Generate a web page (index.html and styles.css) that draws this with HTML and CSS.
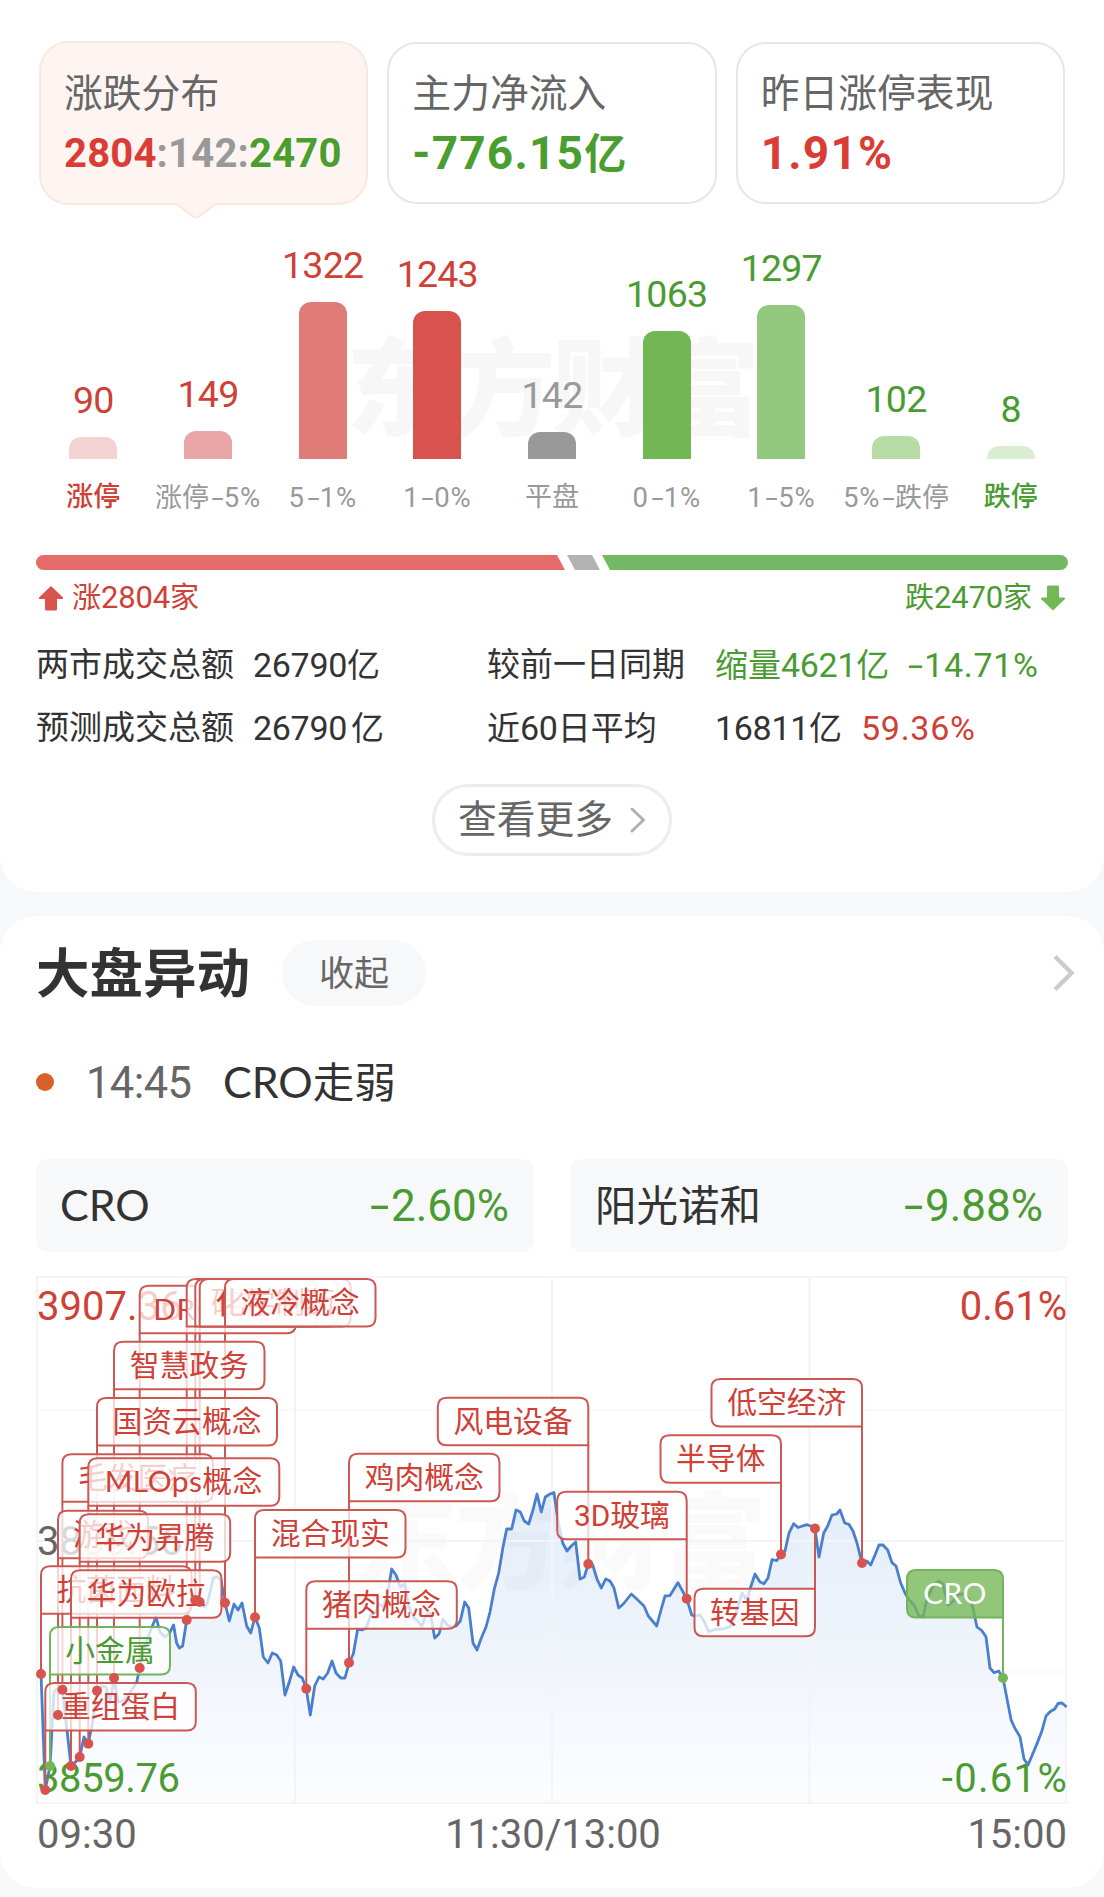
FILE: index.html
```html
<!DOCTYPE html>
<html lang="zh-CN">
<head>
  <meta charset="UTF-8" />
  <title>涨跌分布 - 大盘异动</title>
  <link rel="stylesheet" href="styles.css">
</head>
<body>
  <!-- 涨跌分布 -->
  <section class="panel market">
    <div class="tabs">
      <div class="tab active">
        <div class="tab-title">涨跌分布</div>
        <div class="tab-value ratio"><span class="up">2804</span><span class="flat">:142:</span><span class="down">2470</span></div>
        <svg class="tip" width="44" height="18" viewBox="0 0 44 18"><path d="M0 0H44V1.500H42L25 14.500Q22 17 19 14.500L2 1.500H0Z" fill="#fef5f2"/><path d="M1 1.200Q2.500 1.500 4 3L19 14.500Q22 17 25 14.500L40 3Q41.500 1.500 43 1.200" fill="none" stroke="#fbe7dd" stroke-width="2"/></svg>
      </div>
      <div class="tab">
        <div class="tab-title">主力净流入</div>
        <div class="tab-value down">-776.15<span class="unit">亿</span></div>
      </div>
      <div class="tab">
        <div class="tab-title">昨日涨停表现</div>
        <div class="tab-value up">1.91%</div>
      </div>
    </div>

    <div class="bars">
      <div class="watermark">东方财富</div>
      <div class="col"><span class="num up">90</span><i class="bar b1" style="height: 22px"></i></div>
      <div class="col"><span class="num up">149</span><i class="bar b2" style="height: 28px"></i></div>
      <div class="col"><span class="num up">1322</span><i class="bar b3" style="height: 157px"></i></div>
      <div class="col"><span class="num up">1243</span><i class="bar b4" style="height: 148px"></i></div>
      <div class="col"><span class="num flat">142</span><i class="bar b5" style="height: 27px"></i></div>
      <div class="col"><span class="num down">1063</span><i class="bar b6" style="height: 128px"></i></div>
      <div class="col"><span class="num down">1297</span><i class="bar b7" style="height: 154px"></i></div>
      <div class="col"><span class="num down">102</span><i class="bar b8" style="height: 23px"></i></div>
      <div class="col"><span class="num down">8</span><i class="bar b9" style="height: 13px"></i></div>
    </div>
    <div class="labels">
      <span class="up strong">涨停</span>
      <span>涨停<b><i class="minus">-</i>5%</b></span>
      <span><b>5<i class="minus">-</i>1%</b></span>
      <span><b>1<i class="minus">-</i>0%</b></span>
      <span>平盘</span>
      <span><b>0<i class="minus">-</i>1%</b></span>
      <span><b>1<i class="minus">-</i>5%</b></span>
      <span><b>5%<i class="minus">-</i></b>跌停</span>
      <span class="down strong">跌停</span>
    </div>

    <div class="split">
      <i class="part-up"></i>
      <i class="part-flat"></i>
      <i class="part-down"></i>
    </div>
    <div class="legend">
      <span class="legend-item up">
        <svg width="26" height="26" viewBox="0 0 26 26"><path d="M13 1L25 12.500Q25.500 14 24 14H19V24Q19 25.500 17.500 25.500H8.500Q7 25.500 7 24V14H2Q.5 14 1 12.500Z" fill="#d9534f"/></svg>
        <span>涨<b>2804</b>家</span>
      </span>
      <span class="legend-item down">
        <span>跌<b>2470</b>家</span>
        <svg width="26" height="26" viewBox="0 0 26 26"><path d="M13 25.500L25 14Q25.500 12.500 24 12.500H19V2Q19 .5 17.500 .5H8.500Q7 .5 7 2V12.500H2Q.5 12.500 1 14Z" fill="#72b855"/></svg>
      </span>
    </div>

    <div class="stats">
      <span>两市成交总额</span><span><b>26790</b>亿</span>
      <span>较前一日同期</span><span class="down">缩量<b>4621</b>亿<b class="pct"><i class="minus">-</i>14.71%</b></span>
      <span>预测成交总额</span><span><b class="wide">26790</b>亿</span>
      <span>近<b>60</b>日平均</span><span><b>16811</b>亿<b class="pct up">59.36%</b></span>
    </div>

    <div class="more">
      <span>查看更多</span>
      <svg width="16" height="26" viewBox="0 0 16 26"><path d="M2 2L13.500 13L2 24" fill="none" stroke="#b0b0b0" stroke-width="3" stroke-linecap="round" stroke-linejoin="round"/></svg>
    </div>
  </section>

  <!-- 大盘异动 -->
  <section class="panel moves">
    <div class="head">
      <h2>大盘异动</h2>
      <span class="fold">收起</span>
      <svg class="go" width="24" height="38" viewBox="0 0 24 38"><path d="M3 2.500L19.500 19L3 35.500" fill="none" stroke="#ccc" stroke-width="4.500"/></svg>
    </div>
    <div class="event">
      <i class="dot"></i>
      <span class="time">14:45</span>
      <span class="event-name"><span class="latin">CRO</span>走弱</span>
    </div>
    <div class="stocks">
      <div class="stock"><span class="latin">CRO</span><span class="rate down"><i class="minus">-</i>2.60%</span></div>
      <div class="stock"><span>阳光诺和</span><span class="rate down"><i class="minus">-</i>9.88%</span></div>
    </div>

    <svg class="chart" id="chart" width="1104" height="636" viewBox="0 1252 1104 636">
      <defs>
        <linearGradient id="area" gradientUnits="userSpaceOnUse" x1="0" y1="1490" x2="0" y2="1803">
          <stop offset="0" stop-color="#e3edf9" />
          <stop offset=".5" stop-color="#eff4fb" />
          <stop offset="1" stop-color="#fcfdff" />
        </linearGradient>
      </defs>
      <path id="fill" fill="url(#area)" />
      <text class="mark" x="558" y="1581">东方财富</text>
      <g class="grid">
        <rect x="37" y="1277" width="1029" height="526" />
        <path d="M295 1277V1803M552 1277V1803M809.500 1277V1803M37 1541H1066" />
        <path class="dash" d="M37 1410H1066M37 1672H1066" />
      </g>
      <polyline id="line" class="line" />
      <g class="axis">
        <text class="t-up" x="37" y="1319.500">3907.36</text>
        <text class="t-gray" x="37" y="1555">3883.56</text>
        <text class="t-down tight" x="37" y="1791.500">3859.76</text>
        <text class="t-up end" x="1067" y="1319.500">0.61%</text>
        <text class="t-down end spaced" x="1068" y="1791.500">-0.61%</text>
        <text class="t-gray" x="37" y="1847.500">09:30</text>
        <text class="t-gray mid" x="553" y="1847.500">11:30/13:00</text>
        <text class="t-gray end" x="1067" y="1847.500">15:00</text>
      </g>
      <g id="poles"></g>
      <g id="flags"></g>
      <g id="dots"></g>
    </svg>
  </section>

  <script>
    // 分时线
    const points = [
      [41,1674],[45.3,1790],[50,1766],[54,1692],[58,1688],[62.5,1690],[67,1730],[71,1766],[75.5,1762],[79.7,1757],
      [84,1737],[88.3,1743],[92.5,1723],[97,1691],[101.5,1686],[106,1687],[110,1703],[114,1678],[118,1702],[122,1701],
      [127,1697],[133,1688],[136.5,1683],[139.7,1668],[143.5,1650],[148,1637],[156,1617],[160,1632],[165,1637],[169.5,1633],
      [173.6,1625],[176.6,1643],[179.3,1648],[182.6,1646],[186.7,1620],[190.7,1603],[195.3,1600],[200,1598],[204,1607],[207.5,1603],
      [213.3,1578],[217,1576.5],[221,1580],[225,1603],[229.3,1621],[234,1604],[238,1610],[242,1603],[246.7,1626],[250.7,1633],
      [255,1617],[259.3,1628],[263.3,1657],[268,1663],[272.3,1653],[276.7,1655],[280.7,1661],[285,1695],[289.3,1682],[293.7,1667],
      [298,1675],[302.3,1678],[306.3,1689],[310.3,1715],[314.7,1686],[319,1677],[323.3,1679],[327.7,1673],[332,1661],[336,1673],
      [340.7,1678],[345,1678],[349,1663],[353.3,1654],[357.7,1629],[362,1630],[366.3,1628],[370.7,1615],[375,1613],[379.3,1604],
      [383.3,1607],[387.7,1593],[391.7,1569],[396,1575],[400.3,1587],[404.7,1584],[409,1607],[413.3,1617],[417.7,1621],[421.7,1626],
      [426,1615],[430.3,1613],[434.7,1638],[439,1634],[443,1619],[447.3,1625],[452,1627],[456,1626],[460.3,1621],[464.7,1602],
      [468.7,1608],[473,1643],[477,1650],[481.3,1638],[486,1627],[490,1612],[494.3,1589],[498.7,1573],[503,1547],[506.7,1529],
      [511.7,1529],[516,1510],[520.3,1512],[524.3,1521],[528.7,1524],[533,1510],[537,1494],[541.3,1512],[545.3,1497],[550,1494],
      [554,1492.7],[558.3,1523],[562.7,1543],[567,1551],[571.3,1546],[575.7,1542],[580,1579],[584.3,1577],[588.3,1564],[592.7,1565],
      [597,1579],[601.3,1588],[605.7,1579],[610,1581],[614,1588],[618.7,1608],[623.3,1604],[631.3,1594],[635.7,1598],[644,1606],
      [648.3,1616],[656.7,1626],[661,1610],[665,1596],[670,1595.6],[678,1582.6],[686.7,1598.7],[691.7,1615],[695,1616],[700,1615],
      [704,1621],[708.7,1631.6],[715,1629.5],[723,1629],[730.7,1626.4],[735,1617],[742,1593],[747,1600],[751,1586],[755,1574],
      [760,1582],[764,1583.6],[768,1578],[772,1559.7],[776.7,1560.7],[781,1554.5],[785,1551],[789,1533],[793.7,1523.7],[798,1527.5],
      [806.7,1524.7],[810.7,1526],[815,1528.8],[819,1557],[823.7,1533],[827.7,1526],[832,1515],[836.7,1514],[840,1510],[844.7,1523],
      [849,1524.4],[853,1531],[857,1543],[862,1563],[866.7,1561],[870.7,1565],[875,1555],[879,1545],[883,1545],[887.7,1550],
      [892,1562.7],[896,1566],[900.7,1583],[905,1593],[909,1599.7],[914,1605],[919,1616],[923,1617],[926.7,1600],[933,1586],
      [939,1581],[943,1584],[948,1605],[953,1601.4],[958,1594.6],[964,1593.6],[971.7,1603],[977,1627],[981.7,1630.5],[986,1636.7],
      [990,1668],[994,1672.7],[998.7,1671],[1003,1678],[1011,1719.6],[1015,1728.5],[1020,1736.7],[1024,1759],[1028,1765],[1032.7,1754],
      [1037,1743.6],[1041.7,1731.6],[1046,1716],[1050,1711.7],[1054.7,1709],[1058,1703.5],[1062,1703],[1066.7,1707]
    ];

    // 文字, 旗杆x, 旗子top, 宽度, 圆点y, 类型, 旗子是否在旗杆左侧
    const flags = [
      ["DRG/DIP", 139.7, 1285.7, 156, 1668, "up"],
      ["有机硅", 186.7, 1279, 151, 1620, "up"],
      ["硅能源", 195.3, 1279, 121, 1600, "up"],
      ["化学制药", 199.7, 1279, 151, 1602, "up"],
      ["液冷概念", 225, 1279, 150.5, 1602.7, "up"],
      ["智慧政务", 114, 1341.7, 150.5, 1678, "up"],
      ["国资云概念", 97, 1398, 180, 1690.7, "up"],
      ["毛发医疗", 62.4, 1454.3, 150.5, 1689.7, "up"],
      ["MLOps概念", 88.3, 1458.3, 191, 1743.7, "up"],
      ["游戏", 58, 1510.7, 90, 1715, "up"],
      ["华为昇腾", 79.7, 1514.3, 150.5, 1757, "up"],
      ["抗菌面料", 41, 1566.3, 150.5, 1674, "up"],
      ["华为欧拉", 71, 1570.3, 150.5, 1766, "up"],
      ["小金属", 50, 1627, 120, 1766, "down"],
      ["重组蛋白", 45.3, 1683, 150.5, 1790, "up"],
      ["鸡肉概念", 349, 1453.7, 150.5, 1662.7, "up"],
      ["混合现实", 255, 1510, 150.5, 1617.3, "up"],
      ["猪肉概念", 306.3, 1581.3, 150.5, 1688.7, "up"],
      ["风电设备", 588.3, 1397.7, 150.5, 1564, "up", true],
      ["3D玻璃", 686.7, 1491.7, 129.5, 1598.7, "up", true],
      ["半导体", 781, 1435.3, 120.5, 1554.5, "up", true],
      ["低空经济", 862, 1379, 150.5, 1563, "up", true],
      ["转基因", 815, 1588.8, 120.5, 1528.5, "up", true],
      ["CRO", 1003, 1570, 96, 1678, "solid", true]
    ];

    const ns = "http://www.w3.org/2000/svg";
    const h = 47.5;
    const r = 9;

    function add(parent, tag, attrs, text) {
      const el = document.createElementNS(ns, tag);
      for (const key in attrs) el.setAttribute(key, attrs[key]);
      if (text) el.textContent = text;
      document.getElementById(parent).appendChild(el);
    }

    // 靠旗杆一侧的角是直角, 其余为圆角
    function flagPath(x, y, w, left, above) {
      const br = left && !above ? 0 : r;
      const bl = !left ? 0 : r;
      const tr = above ? 0 : r;
      return `M${x + r} ${y}H${x + w - tr}q${tr} 0 ${tr} ${tr}V${y + h - br}q0 ${br} ${-br} ${br}` +
        `H${x + bl}q${-bl} 0 ${-bl} ${-bl}V${y + r}q0 ${-r} ${r} ${-r}Z`;
    }

    const path = points.map(p => p.join(",")).join(" ");
    document.getElementById("line").setAttribute("points", path);
    document.getElementById("fill").setAttribute("d", `M41,1803L${path}L1066.7,1803Z`);

    flags.forEach(([name, px, top, w, dotY, type, left]) => {
      const x = left ? px - w : px;
      const above = dotY < top;
      add("poles", "path", { class: "pole " + type, d: `M${px} ${above ? top : top + h}V${dotY}` });
      add("flags", "path", { class: "flag " + type, d: flagPath(x, top, w, left, above) });
      const latin = /^[A-Z]{2}/.test(name) ? " wide" : "";
      add("flags", "text", { class: "flag-text " + type + latin, x: x + w / 2, y: top + 34 }, name);
      add("dots", "circle", { class: "point " + type, cx: px, cy: dotY, r: 5 });
    });
  </script>
</body>
</html>
```
FILE: styles.css
```css
* {
  box-sizing: border-box;
}

body {
  margin: 0;
  background: #f6f8fa;
  color: #333;
  font-family: Roboto, "Noto Sans CJK SC", sans-serif;
}

b, i {
  font-weight: normal;
  font-style: normal;
}

.up { color: #cf4036; }
.down { color: #4b9b33; }
.flat { color: #999; }

/* 加宽的减号 */
.minus {
  display: inline-block;
  width: 0.47em;
  transform: scaleX(1.6);
  transform-origin: left;
}

.panel {
  background: #fff;
  padding: 0 36px;
}

.market {
  height: 892px;
  padding-top: 41px;
  border-radius: 0 0 36px 36px;
}

.moves {
  height: 972px;
  margin-top: 24px;
  padding-top: 24px;
  border-radius: 36px;
}

/* 顶部三个卡片 */
.tabs {
  display: flex;
  gap: 19px;
  height: 164px;
  padding: 0 3px;
}

.tab {
  position: relative;
  flex: 1;
  height: 162px;
  margin-top: 1px;
  padding: 22px 0 0 23px;
  border: 2px solid #e6e6e6;
  border-radius: 30px;
  white-space: nowrap;
}

.tab.active {
  height: 164px;
  margin-top: 0;
  padding-top: 23px;
  background: #fef5f2;
  border-color: #fbe7dd;
}

.tab-title {
  height: 55px;
  line-height: 55px;
  font-size: 38.8px;
  color: #666;
}

.tab-value {
  height: 60px;
  margin-top: 2px;
  line-height: 60px;
  font-size: 46px;
  font-weight: 700;
  letter-spacing: 1.2px;
}

.tab-value.up, .ratio .up { color: #d93d35; }
.tab-value.down, .ratio .down { color: #4a9e2f; }

.tab-value .unit {
  font-size: 42px;
}

.tab-value.ratio {
  font-size: 40px;
  line-height: 61px;
  letter-spacing: 0.2px;
}

.tip {
  position: absolute;
  left: 133px;
  bottom: -17px;
}

/* 柱状图 */
.bars {
  position: relative;
  display: grid;
  grid-template-columns: repeat(9, 1fr);
  height: 254px;
}

.watermark {
  position: absolute;
  left: 310px;
  top: 111px;
  font-size: 106px;
  line-height: 150px;
  font-weight: 900;
  letter-spacing: -3px;
  color: #f7f7f7;
}

.col {
  position: relative;
  display: flex;
  flex-direction: column;
  align-items: center;
  justify-content: flex-end;
}

.num {
  line-height: 40px;
  margin-bottom: 17px;
  font-size: 37.5px;
  letter-spacing: -0.8px;
}

.bar {
  width: 48px;
  border-radius: 12px 12px 0 0;
}

.b1 { background: #f2d3d2; }
.b2 { background: #e8a6a7; }
.b3 { background: #df7c77; }
.b4 { background: #d8534d; }
.b5 { background: #999; }
.b6 { background: #73b755; }
.b7 { background: #93c97f; }
.b8 { background: #b7dca6; }
.b9 { background: #daedd3; }

.labels {
  display: grid;
  grid-template-columns: repeat(9, 1fr);
  height: 40px;
  margin-top: 18px;
  line-height: 41px;
  font-size: 27px;
  text-align: center;
  white-space: nowrap;
  color: #999;
}

.labels b {
  font-size: 27.5px;
  letter-spacing: 0.8px;
}

.labels .minus {
  margin: 0 3px 0 -1px;
}

.labels .up { color: #cf4036; }
.labels .down { color: #4b9b33; }
.labels .strong { font-weight: 500; }

/* 涨跌比例条 */
.split {
  display: flex;
  height: 15px;
  margin-top: 38px;
}

.part-up {
  width: 529px;
  background: #e56c69;
  border-radius: 8px 0 0 8px;
  clip-path: polygon(0 0, calc(100% - 8px) 0, 100% 100%, 0 100%);
}

.part-flat {
  width: 33px;
  margin-left: 2px;
  background: #b3b3b3;
  clip-path: polygon(0 0, calc(100% - 8px) 0, 100% 100%, 8px 100%);
}

.part-down {
  flex: 1;
  margin-left: 2px;
  background: #73b865;
  border-radius: 0 8px 8px 0;
  clip-path: polygon(0 0, 100% 0, 100% 100%, 8px 100%);
}

.legend {
  display: flex;
  justify-content: space-between;
  height: 40px;
  margin-top: 8px;
  padding: 0 2px;
  line-height: 40px;
  font-size: 29px;
}

.legend-item {
  display: flex;
  align-items: center;
  gap: 8px;
}

.legend b {
  font-size: 31px;
  letter-spacing: -0.2px;
}

.stats {
  display: grid;
  grid-template-columns: 217px 234px 228px 1fr;
  margin-top: 16px;
  line-height: 62px;
  height: 124px;
  font-size: 33px;
  white-space: nowrap;
}

.stats b {
  font-size: 34px;
  letter-spacing: -0.3px;
}

.stats .wide {
  margin-right: 4px;
}

.stats .pct {
  margin-left: 19px;
  letter-spacing: 0.7px;
}

.more {
  display: flex;
  align-items: center;
  justify-content: center;
  gap: 17px;
  width: 240px;
  height: 72px;
  margin: 26px auto 0;
  border: 3px solid #ededed;
  border-radius: 36px;
  font-size: 38.8px;
  line-height: 66px;
  color: #666;
}

.more span {
  height: 66px;
}

/* 大盘异动 */
.head {
  display: flex;
  align-items: center;
  height: 66px;
}

h2 {
  margin: 4px 0 0;
  font-size: 53.5px;
  line-height: 66px;
  font-weight: 700;
}

.fold {
  width: 144px;
  height: 66px;
  margin-left: 32px;
  border-radius: 33px;
  background: #f6f8fa;
  color: #666;
  font-size: 35px;
  line-height: 70px;
  text-align: center;
}

.go {
  margin-left: auto;
  margin-right: -8px;
}

.event {
  display: flex;
  align-items: center;
  height: 60px;
  margin-top: 48px;
  line-height: 62px;
}

.dot {
  width: 18px;
  height: 18px;
  margin-bottom: 4px;
  border-radius: 50%;
  background: #d8612a;
}

.time {
  width: 136px;
  margin-left: 32px;
  font-size: 43.5px;
  letter-spacing: -0.6px;
  color: #666;
}

.event-name {
  margin-left: 1px;
  font-size: 41.5px;
}

.latin {
  font-family: Lato, sans-serif;
  font-size: 43px;
  line-height: 1;
}

.stocks {
  display: flex;
  gap: 36px;
  margin-top: 45px;
}

.stock {
  display: flex;
  flex: 1;
  justify-content: space-between;
  height: 93px;
  padding: 0 25px;
  border-radius: 12px;
  background: #f6f8fa;
  font-size: 41.5px;
  line-height: 95px;
}

.stock .latin {
  margin-left: -1px;
  line-height: 92px;
}

.rate {
  font-size: 44px;
}

/* 分时图 */
.chart {
  display: block;
  margin-left: -36px;
}

.mark {
  font-size: 106px;
  font-weight: 900;
  letter-spacing: -3px;
  text-anchor: middle;
  fill: #000;
  fill-opacity: 0.02;
}

.grid {
  fill: none;
  stroke: #f3f4f6;
  stroke-width: 2;
}

.grid .dash {
  stroke-width: 1.5;
  stroke-dasharray: 2 2;
}

.line {
  fill: none;
  stroke: #4a7fd0;
  stroke-width: 2.8;
  stroke-linejoin: round;
}

.axis text {
  font-size: 40px;
}

.axis .tight {
  letter-spacing: -0.4px;
}

.axis .spaced {
  letter-spacing: 1.3px;
}

.t-up { fill: #cf4036; }
.t-down { fill: #4b9b33; }
.t-gray { fill: #666; }
.mid { text-anchor: middle; }
.end { text-anchor: end; }

.pole {
  stroke: #cb5853;
  stroke-width: 2;
}

.flag {
  fill: #fff;
  fill-opacity: 0.75;
  stroke: #cb5853;
  stroke-width: 2;
}

.pole.down, .flag.down, .pole.solid { stroke: #73b35c; }

.flag.solid {
  fill: #73b755;
  fill-opacity: 0.78;
  stroke: #73b35c;
}

.flag-text {
  font-size: 29.8px;
  text-anchor: middle;
  fill: #cf4036;
}

.flag-text.down { fill: #4b9b33; }
.flag-text.solid { fill: #fff; }

.flag-text.wide {
  font-family: Lato, "Noto Sans CJK SC", sans-serif;
  letter-spacing: 0.5px;
}

.point { fill: #d8534d; }
.point.down, .point.solid { fill: #73b755; }
```
